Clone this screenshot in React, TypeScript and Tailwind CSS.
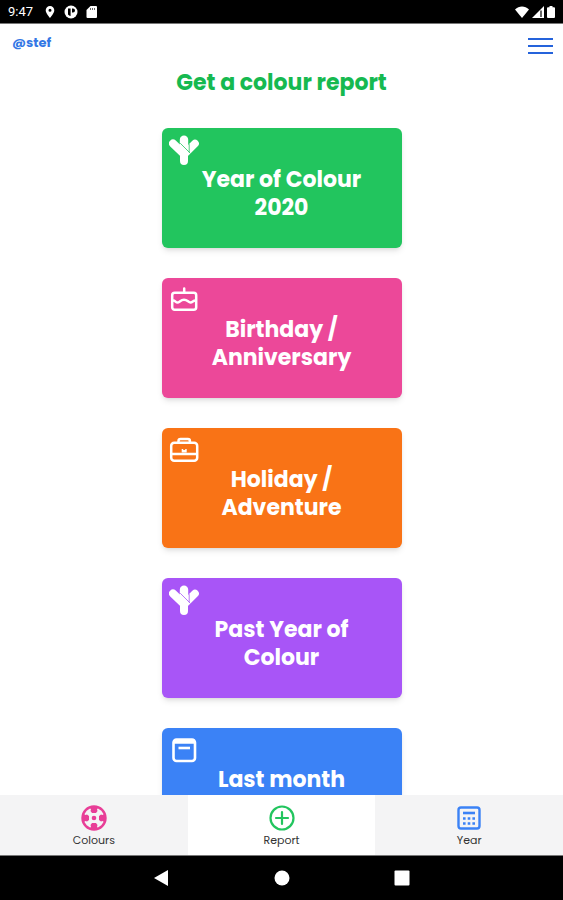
import React from 'react'
import clsx from 'clsx'

interface Report {
  label: string
  color: string
  icon: React.ReactNode
}

interface Tab {
  label: string
  icon: React.ReactNode
  active?: boolean
}

// Gaps between the branches use currentColor, so the card sets it to its background
const YearLogo: React.FC = () => (
  <svg viewBox="0 0 30 30" className="size-[30px]" fill="none" strokeLinecap="round" aria-hidden="true">
    <path d="M15 4.7v12" stroke="white" strokeWidth="8.4" />
    <path d="M26 8.5 16 18.5" stroke="white" strokeWidth="7.6" />
    <path d="M11.5 8.5 21 18M20.2 9.5v7.5" stroke="currentColor" strokeWidth=".8" />
    <path d="m4 8.5 11 10.5v7" stroke="white" strokeWidth="8" strokeLinejoin="round" />
  </svg>
)

const CakeIcon: React.FC = () => (
  <svg viewBox="0 0 30 30" className="size-[30px]" fill="none" stroke="white" strokeWidth="2.5" strokeLinecap="round" aria-hidden="true">
    <rect x="3.2" y="7.8" width="24" height="17" rx="2.5" />
    <path d="M15.2 3.5v4M4 15.5c2.5 0 2.5 2 4.5 2s3-2.800 6.500-2.800 4.300 2.800 6.500 2.800 2.500-2 5-2" />
  </svg>
)

const BriefcaseIcon: React.FC = () => (
  <svg viewBox="0 0 30 30" className="size-[30px]" fill="none" stroke="white" strokeWidth="2.5" aria-hidden="true">
    <rect x="2.2" y="7.8" width="26" height="18" rx="3" />
    <path d="M9.5 8V6a2 2 0 0 1 2-2h7.4a2 2 0 0 1 2 2v2M2.2 19h26" />
    <path d="M12.7 14h1.5v1h2v-1h1.500v3.500h-5z" fill="white" stroke="none" />
  </svg>
)

const CalendarIcon: React.FC = () => (
  <svg viewBox="0 0 30 30" className="size-[30px]" fill="none" stroke="white" strokeWidth="2.6" aria-hidden="true">
    <rect x="4.5" y="4.5" width="21.5" height="21.5" rx="3" />
    <path d="M5 6.5h20.5" strokeWidth="4.5" />
    <path d="M9.5 13h11.5" />
  </svg>
)

const PaletteIcon: React.FC = () => (
  <svg viewBox="0 0 26 26" className="size-[26px] text-[#e83e97]" fill="currentColor" aria-hidden="true">
    <circle cx="13" cy="13" r="11.5" fill="#f4f4f5" stroke="currentColor" strokeWidth="2.4" />
    <path d="M8.5 2h9L16 4.500l.5 1.500-1.500 2h-4L9.500 6l.5-1.500zM8.500 24h9L16 21.500l.5-1.500-1.500-2h-4l-1.500 2 .5 1.500z" />
    <path d="M2 8.500v9L4.500 16l1.500.5 2-1.500v-4L6 9.500 4.500 10zM24 8.500v9L21.500 16l-1.500.5-2-1.500v-4l2-1.500 1.500.5z" />
    <circle cx="13" cy="13" r="2.3" />
  </svg>
)

const PlusIcon: React.FC = () => (
  <svg viewBox="0 0 26 26" className="size-[26px] text-[#22c55e]" fill="none" stroke="currentColor" strokeWidth="2.2" strokeLinecap="round" aria-hidden="true">
    <circle cx="13" cy="13" r="11.5" />
    <path d="M13 7v12M7 13h12" />
  </svg>
)

const CalculatorIcon: React.FC = () => (
  <svg viewBox="0 0 26 26" className="size-[26px] text-[#3b82f6]" fill="none" stroke="currentColor" strokeWidth="2.4" aria-hidden="true">
    <rect x="2.5" y="2.5" width="21" height="21" rx="2.5" />
    <path d="M7 8h12" strokeWidth="2.6" />
    <path d="M7 13.500h12M7 18.500h12" strokeWidth="2.6" strokeDasharray="2.6 2.1" />
  </svg>
)

const REPORTS: Report[] = [
  { label: 'Year of Colour 2020', color: 'bg-[#22c55e] text-[#22c55e]', icon: <YearLogo /> },
  { label: 'Birthday / Anniversary', color: 'bg-[#ec4899]', icon: <CakeIcon /> },
  { label: 'Holiday / Adventure', color: 'bg-[#f97316]', icon: <BriefcaseIcon /> },
  { label: 'Past Year of Colour', color: 'bg-[#a855f7] text-[#a855f7]', icon: <YearLogo /> },
  { label: 'Last month', color: 'bg-[#3b82f6]', icon: <CalendarIcon /> },
]

const TABS: Tab[] = [
  { label: 'Colours', icon: <PaletteIcon /> },
  { label: 'Report', icon: <PlusIcon />, active: true },
  { label: 'Year', icon: <CalculatorIcon /> },
]

const StatusBar: React.FC = () => (
  <div className="flex h-6 shrink-0 items-center justify-between border-b border-[#777] bg-black px-2 text-white">
    <div className="flex items-center gap-[7px]">
      <span className="w-7 font-[Roboto,sans-serif] text-[13px]">9:47</span>
      <svg viewBox="0 0 14 14" className="size-[14px]" fill="white" fillRule="evenodd" aria-hidden="true">
        <path d="M7 1a4.300 4.300 0 0 0-4.300 4.300C2.700 8.500 7 13 7 13s4.300-4.500 4.300-7.700A4.300 4.300 0 0 0 7 1m0 2.800a1.500 1.500 0 1 1 0 3 1.500 1.500 0 0 1 0-3" />
      </svg>
      <svg viewBox="0 0 14 14" className="size-[14px]" aria-hidden="true">
        <circle cx="7" cy="7" r="6.5" fill="white" />
        <path d="M4 3.5h2.600V11A5 5 0 0 1 4 9.500zM8 3.500h1a2 2 0 0 1 0 4H8z" fill="black" />
      </svg>
      <svg viewBox="0 0 14 14" className="size-[14px]" fill="white" aria-hidden="true">
        <path d="M5.5 1H11a1 1 0 0 1 1 1v10a1 1 0 0 1-1 1H2.500a1 1 0 0 1-1-1V5z" />
        <path d="M5.5 3v2M7.500 3v2M9.500 3v2" stroke="black" strokeWidth=".6" />
      </svg>
    </div>
    <div className="flex items-center gap-[3px]">
      <svg viewBox="0 0 14 12" className="h-3 w-[14px]" fill="white" aria-hidden="true">
        <path d="M0 3.5C4-.5 10-.5 14 3.500L7 12z" />
      </svg>
      <svg viewBox="0 0 12 12" className="size-3" aria-hidden="true">
        <path d="M12 0v12H0z" fill="white" />
        <path d="M9 4.5V11" stroke="black" strokeWidth="1.2" />
      </svg>
      <svg viewBox="0 0 8 12" className="h-3 w-2" fill="white" aria-hidden="true">
        <path d="M2.5 0h3v1.300H7a1 1 0 0 1 1 1V11a1 1 0 0 1-1 1H1a1 1 0 0 1-1-1V2.300a1 1 0 0 1 1-1h1.500z" />
      </svg>
    </div>
  </div>
)

const ReportCard: React.FC<{ report: Report }> = ({ report }) => (
  <button
    className={clsx(
      'flex h-30 w-60 shrink-0 flex-col items-start rounded-md p-[7px] shadow-md',
      report.color
    )}
  >
    {report.icon}
    <span className="w-full px-6 pt-px text-center text-[22px] leading-7 font-bold text-white">{report.label}</span>
  </button>
)

const SystemBar: React.FC = () => (
  <div className="flex h-11 shrink-0 items-center justify-center gap-[104px] bg-black">
    <button aria-label="Back">
      <svg viewBox="0 0 16 16" className="size-4" fill="white"><path d="M14 0v16L0 8z" /></svg>
    </button>
    <button aria-label="Home">
      <svg viewBox="0 0 16 16" className="size-4" fill="white"><circle cx="8" cy="8" r="7.5" /></svg>
    </button>
    <button aria-label="Overview">
      <svg viewBox="0 0 16 16" className="size-4" fill="white"><rect x=".5" y=".5" width="15" height="15" rx="1" /></svg>
    </button>
  </div>
)

export default function App() {
  return (
    <div className="flex h-screen flex-col overflow-hidden bg-white font-[Poppins,Inter,sans-serif]">
      <StatusBar />

      <header className="flex h-[41px] shrink-0 items-center justify-between pt-[3px] pr-[10px] pl-3">
        <a href="#profile" className="pb-[6px] text-[13px] leading-5 font-bold text-[#3478e5]">@stef</a>
        <button aria-label="Menu" className="flex w-[25px] flex-col gap-[5px]">
          <span className="h-[2px] w-full bg-[#2563db]" />
          <span className="h-[2px] w-full bg-[#2563db]" />
          <span className="h-[2px] w-full bg-[#2563db]" />
        </button>
      </header>

      <main className="flex min-h-0 flex-1 flex-col items-center overflow-hidden">
        <h1 className="mb-[27px] shrink-0 text-[22px] leading-9 font-bold text-[#16b950]">Get a colour report</h1>
        <div className="flex flex-col gap-[30px]">
          {REPORTS.map((report) => (
            <ReportCard key={report.label} report={report} />
          ))}
        </div>
      </main>

      <nav className="flex h-15 shrink-0">
        {TABS.map((tab) => (
          <a
            key={tab.label}
            href={`#${tab.label.toLowerCase()}`}
            className={clsx(
              'flex flex-1 flex-col items-center pt-[10px] text-[11px] leading-[18px] text-[#333]',
              tab.active ? 'bg-white' : 'bg-[#f4f4f5]'
            )}
          >
            {tab.icon}
            {tab.label}
          </a>
        ))}
      </nav>
      <div className="h-px shrink-0 bg-[#777]" />

      <SystemBar />
    </div>
  )
}
